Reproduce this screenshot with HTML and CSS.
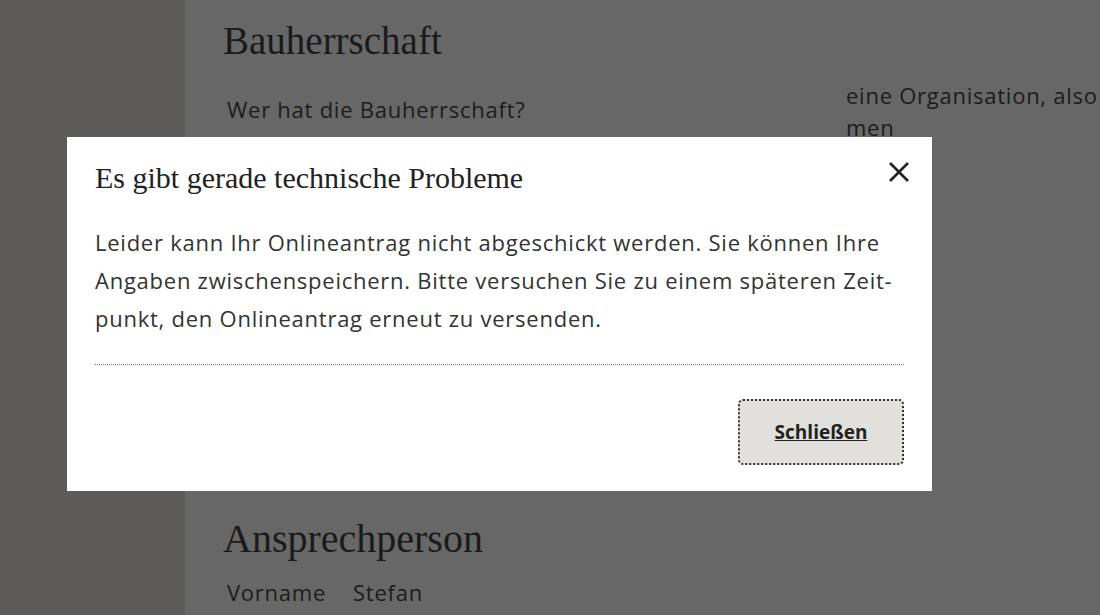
FILE: index.html
```html
<!DOCTYPE html>
<html lang="de">
<head>
  <meta charset="UTF-8" />
  <meta name="viewport" content="width=device-width, initial-scale=1.0" />
  <title>Onlineantrag</title>
  <link rel="stylesheet" href="styles.css">
</head>
<body>
  <div class="page">
    <aside class="sidebar"></aside>
    <main class="content">
      <section class="block">
        <h2>Bauherrschaft</h2>
        <div class="row">
          <span class="question">Wer hat die Bauherrschaft?</span>
          <span class="answer">eine Organisation, also<br>men</span>
        </div>
      </section>
      <section class="block contact">
        <h2>Ansprechperson</h2>
        <div class="row">
          <span class="field">Vorname</span>
          <span class="value">Stefan</span>
        </div>
      </section>
    </main>
  </div>

  <!-- Fehlerdialog -->
  <div class="dialog" role="dialog" aria-labelledby="dialogTitle">
    <div class="dialog-head">
      <h3 id="dialogTitle">Es gibt gerade technische Probleme</h3>
      <button type="button" class="close-btn" aria-label="Schließen">
        <svg width="22" height="22" viewBox="0 0 22 22">
          <path d="M2 2 L20 20 M20 2 L2 20" stroke="#222" stroke-width="2.6" fill="none" />
        </svg>
      </button>
    </div>
    <p class="dialog-text">Leider kann Ihr Onlineantrag nicht abgeschickt werden. Sie können Ihre<br>Angaben zwischenspeichern. Bitte versuchen Sie zu einem späteren Zeit-<br>punkt, den Onlineantrag erneut zu versenden.</p>
    <div class="dialog-foot">
      <button type="button" class="dismiss-btn">Schließen</button>
    </div>
  </div>
</body>
</html>
```

FILE: styles.css
```css
html, body {
  margin: 0;
  height: 100%;
  overflow: hidden;
}

body {
  font-family: "Open Sans", "Noto Sans", sans-serif;
  background: #676767;
  color: #1c1c1c;
  position: relative;
}

.page {
  display: grid;
  grid-template-columns: 185px 1fr;
  height: 615px;
}

.sidebar {
  background: #5d5c5a;
}

.content {
  padding: 18px 0 0 38px;
}

.block h2 {
  font-family: "Liberation Serif", serif;
  font-weight: normal;
  font-size: 39px;
  margin: 0;
  color: #1a1a1a;
}

.row {
  display: flex;
  font-size: 22px;
  letter-spacing: 0.75px;
  margin-top: 16px;
  padding-left: 4px;
  white-space: nowrap;
}

.question {
  width: 619px;
  padding-top: 15px;
}

.answer {
  line-height: 32px;
}

.contact {
  margin-top: 372px;
}

.contact h2 {
  font-size: 40px;
}

.contact .row {
  margin-top: 15px;
}

.field {
  width: 126px;
}

/* dialog over the dimmed page */
.dialog {
  position: absolute;
  left: 67px;
  top: 137px;
  width: 865px;
  height: 354px;
  box-sizing: border-box;
  background: #fff;
  padding: 24px 28px 0 28px;
  color: #333;
}

.dialog-head {
  display: flex;
  justify-content: space-between;
  align-items: flex-start;
}

.dialog-head h3 {
  font-family: "Liberation Serif", serif;
  font-weight: normal;
  font-size: 30px;
  margin: 0;
  color: #222;
}

.close-btn {
  background: none;
  border: none;
  padding: 0;
  margin: 0 -6px 0 0;
  cursor: pointer;
  line-height: 0;
}

.dialog-text {
  font-size: 22px;
  letter-spacing: 0.75px;
  line-height: 38px;
  margin: 28px 0 0 0;
  padding-bottom: 27px;
  border-bottom: 1px dotted #777;
  white-space: nowrap;
}

.dialog-foot {
  display: flex;
  justify-content: flex-end;
  padding-top: 34px;
}

.dismiss-btn {
  width: 166px;
  height: 66px;
  background: #e1e0dc;
  border: 2px dotted #333;
  border-radius: 5px;
  font-family: "Open Sans", sans-serif;
  font-weight: bold;
  font-size: 19px;
  color: #222;
  text-decoration: underline;
  cursor: pointer;
}
```
